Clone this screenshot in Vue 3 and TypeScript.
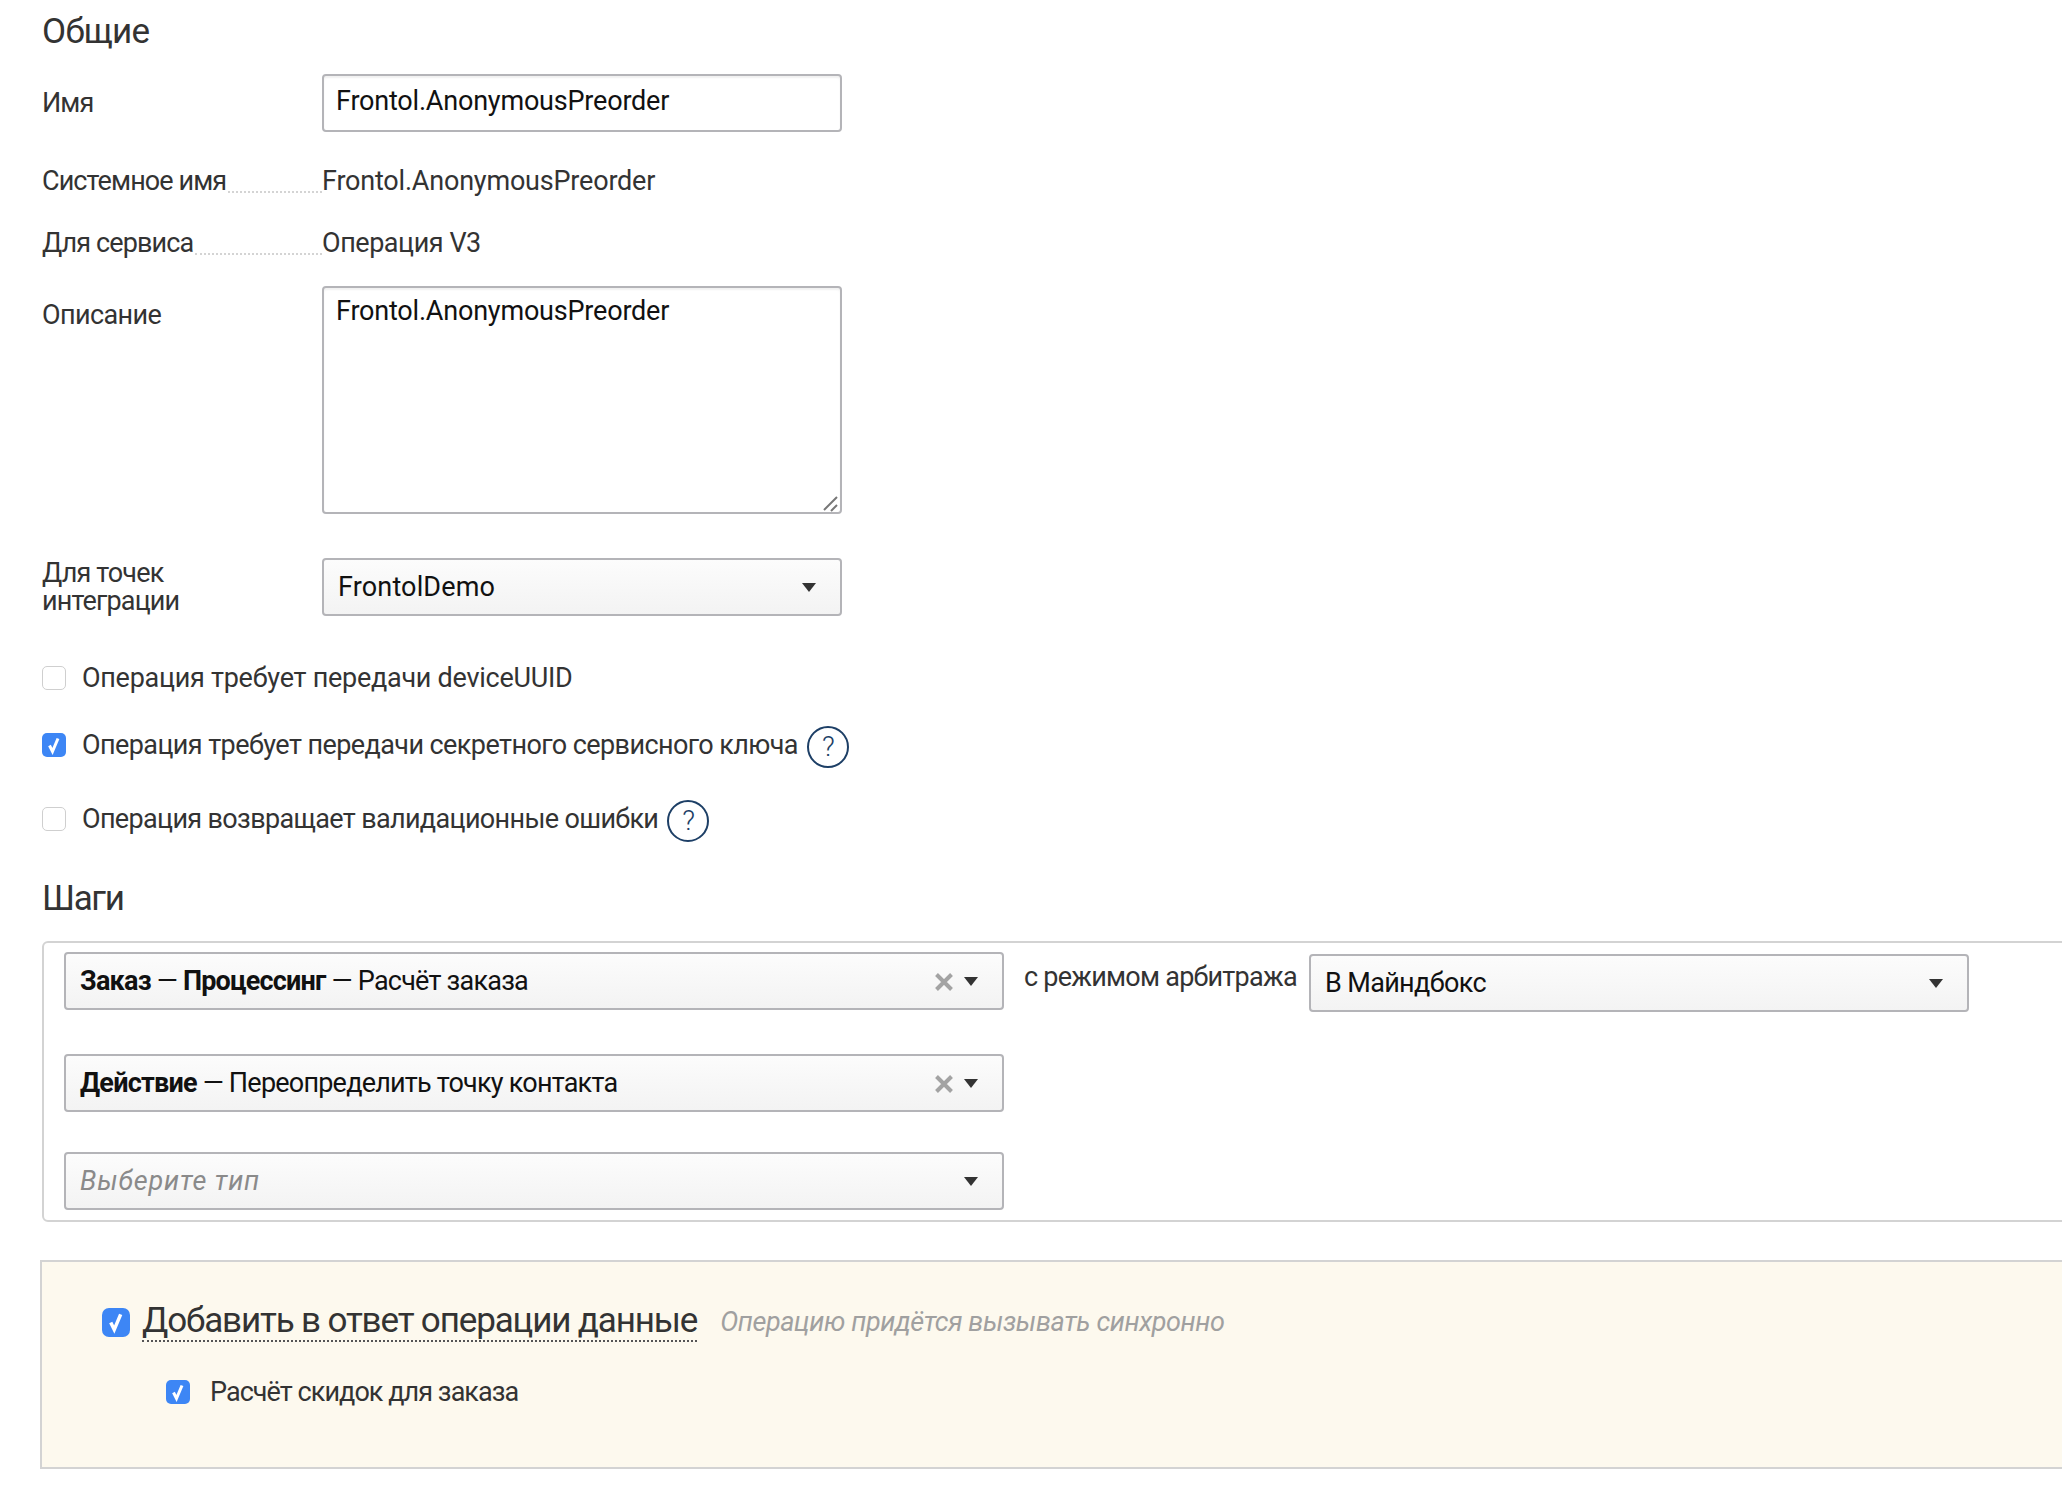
<script setup lang="ts">
const checks = [
  { text: 'Операция требует передачи deviceUUID', on: false, help: false, cls: 'ls-a' },
  { text: 'Операция требует передачи секретного сервисного ключа', on: true, help: true, cls: 'ls-b' },
  { text: 'Операция возвращает валидационные ошибки', on: false, help: true, cls: 'ls-c' },
]
</script>

<template>
  <div class="page">
    <h2 class="heading first">Общие</h2>

    <div class="row name-row">
      <label class="label">Имя</label>
      <input class="field" value="Frontol.AnonymousPreorder" />
    </div>
    <div class="row text-row sys-row">
      <div class="label dotted"><span>Системное имя</span><i></i></div>
      <div class="value latin">Frontol.AnonymousPreorder</div>
    </div>
    <div class="row text-row svc-row">
      <div class="label dotted"><span>Для сервиса</span><i></i></div>
      <div class="value svc-value">Операция V3</div>
    </div>
    <div class="row desc-row">
      <label class="label desc-label">Описание</label>
      <div class="area-wrap">
        <textarea class="field area">Frontol.AnonymousPreorder</textarea>
        <svg class="grip" viewBox="0 0 16 16" width="16" height="16"><path d="M1 14 L14 1 M8 15 L14 9" stroke="#777" stroke-width="2" fill="none" /></svg>
      </div>
    </div>
    <div class="row points-row">
      <label class="label two-line">Для точек<br />интеграции</label>
      <div class="select">
        <span class="select-text demo">FrontolDemo</span>
        <span class="caret"></span>
      </div>
    </div>

    <div class="checks">
      <div v-for="c in checks" :key="c.text" class="check-row">
        <span class="box" :class="{ on: c.on }">
          <svg v-if="c.on" viewBox="0 0 24 24" width="24" height="24"><path d="M7.5 12.5 L10.5 18.5 L16 5.5" fill="none" stroke="#fff" stroke-width="3" /></svg>
        </span>
        <span class="check-text" :class="c.cls">{{ c.text }}</span>
        <span v-if="c.help" class="help">?</span>
      </div>
    </div>

    <h2 class="heading steps-heading">Шаги</h2>

    <div class="steps">
      <div class="step step-one">
        <div class="select step-select">
          <span class="select-text ls-step"><b>Заказ</b> — <b>Процессинг</b> — Расчёт заказа</span>
          <svg class="cross" viewBox="0 0 18 18" width="18" height="18"><path d="M1.5 1.5 L16.5 16.5 M16.5 1.5 L1.5 16.5" stroke="#a3a3a3" stroke-width="4" /></svg>
          <span class="caret"></span>
        </div>
        <span class="mode">с режимом арбитража</span>
        <div class="select mode-select">
          <span class="select-text mode-value">В Майндбокс</span>
          <span class="caret"></span>
        </div>
      </div>
      <div class="step step-two">
        <div class="select step-select">
          <span class="select-text ls-step"><b>Действие</b> — Переопределить точку контакта</span>
          <svg class="cross" viewBox="0 0 18 18" width="18" height="18"><path d="M1.5 1.5 L16.5 16.5 M16.5 1.5 L1.5 16.5" stroke="#a3a3a3" stroke-width="4" /></svg>
          <span class="caret"></span>
        </div>
      </div>
      <div class="step step-three">
        <div class="select step-select">
          <span class="select-text placeholder">Выберите тип</span>
          <span class="caret"></span>
        </div>
      </div>
    </div>

    <div class="extra">
      <div class="extra-main">
        <span class="box on large">
          <svg viewBox="0 0 24 24" width="28" height="28"><path d="M7.5 12.5 L10.5 18.5 L16 5.5" fill="none" stroke="#fff" stroke-width="3" /></svg>
        </span>
        <span class="extra-title">Добавить в ответ операции данные</span>
        <span class="extra-hint">Операцию придётся вызывать синхронно</span>
      </div>
      <div class="extra-sub">
        <span class="box on">
          <svg viewBox="0 0 24 24" width="24" height="24"><path d="M7.5 12.5 L10.5 18.5 L16 5.5" fill="none" stroke="#fff" stroke-width="3" /></svg>
        </span>
        <span class="sub-text">Расчёт скидок для заказа</span>
      </div>
    </div>
  </div>
</template>

<style>
html, body { margin: 0; background: #fff; overflow: hidden; }
</style>

<style scoped>
.page {
  box-sizing: border-box;
  width: 2062px;
  height: 1486px;
  overflow: hidden;
  padding-left: 42px;
  font-family: Roboto, "Noto Sans", sans-serif;
  font-size: 27px;
  line-height: 28px;
  letter-spacing: -0.9px;
  color: #333;
}
.heading { margin: 0; font-size: 35px; line-height: 40px; font-weight: 400; letter-spacing: -0.7px; }
.first { padding-top: 12px; }
.row { display: grid; grid-template-columns: 280px 520px; }
.label { display: block; }
.name-row { margin-top: 22px; align-items: center; }
.field {
  box-sizing: border-box;
  width: 520px;
  height: 58px;
  margin: 0;
  padding: 0 12px 4px;
  border: 2px solid #b4b4b8;
  border-radius: 4px;
  background: #fff;
  box-shadow: inset 0 2px 2px rgba(0, 0, 0, 0.06);
  font: inherit;
  letter-spacing: -0.2px;
  color: #111;
  outline: none;
}
.text-row { height: 28px; align-items: end; }
.sys-row { margin-top: 35px; }
.svc-row { margin-top: 34px; }
.latin { letter-spacing: -0.2px; }
.svc-value { letter-spacing: -0.45px; }
.dotted { display: flex; align-items: flex-end; }
.dotted span { white-space: nowrap; }
.dotted i { flex: 1; margin: 0 0 2px 2px; border-bottom: 2px dotted #d4d4d4; }
.desc-row { margin-top: 29px; }
.desc-label { padding-top: 15px; letter-spacing: -0.6px; }
.area-wrap { position: relative; height: 228px; }
.area { height: 228px; padding: 9px 12px; resize: none; display: block; }
.grip { position: absolute; right: 3px; bottom: 2px; }
.points-row { margin-top: 44px; align-items: center; }
.two-line { letter-spacing: -0.85px; }
.select {
  box-sizing: border-box;
  display: flex;
  align-items: center;
  height: 58px;
  padding: 0 24px 0 14px;
  border: 2px solid #b4b4b8;
  border-radius: 4px;
  background: linear-gradient(#fcfcfc, #f3f3f3);
  color: #111;
}
.select-text { flex: 1; white-space: nowrap; }
.select-text b { font-weight: 700; }
.demo { letter-spacing: 0.15px; }
.mode-value { letter-spacing: -0.65px; }
.ls-step { letter-spacing: -0.78px; }
.caret {
  width: 0;
  height: 0;
  border-left: 7px solid transparent;
  border-right: 7px solid transparent;
  border-top: 9px solid #333;
}
.cross { margin: 2px 11px 0 0; }
.checks { display: flex; flex-direction: column; }
.check-row { display: flex; align-items: center; }
.check-row:nth-child(1) { height: 28px; margin-top: 48px; }
.check-row:nth-child(2) { height: 41px; margin-top: 32px; }
.check-row:nth-child(3) { height: 41px; margin-top: 33px; }
.box {
  box-sizing: border-box;
  flex: none;
  width: 24px;
  height: 24px;
  border: 1px solid #cfcfcf;
  border-radius: 5px;
  background: #fff;
  display: block;
}
.box.on { border: 0; background: #3d86f5; }
.box svg { display: block; }
.box.large { width: 28px; height: 29px; border-radius: 7px; }
.check-text { margin-left: 16px; white-space: nowrap; }
.ls-a { letter-spacing: -0.27px; }
.ls-b { letter-spacing: -0.58px; }
.ls-c { letter-spacing: -0.65px; }
.help {
  box-sizing: border-box;
  flex: none;
  width: 42px;
  height: 42px;
  margin: 4px 0 0 9px;
  border: 2px solid #1d3f66;
  border-radius: 50%;
  display: flex;
  align-items: center;
  justify-content: center;
  color: #1d3f66;
  font-size: 28px;
  font-weight: 300;
}
.steps-heading { margin-top: 40px; letter-spacing: -1.3px; }
.steps {
  box-sizing: border-box;
  width: 2100px;
  height: 281px;
  margin-top: 22px;
  padding: 9px 0 0 20px;
  border: 2px solid #d3d3d3;
  border-radius: 6px;
}
.step { display: flex; align-items: flex-start; }
.step-select { width: 940px; flex: none; }
.step-two { margin-top: 42px; }
.step-three { margin-top: 40px; }
.mode { margin: 11px 0 0 20px; width: 285px; flex: none; white-space: nowrap; letter-spacing: -0.75px; }
.mode-select { width: 660px; flex: none; margin-top: 2px; }
.placeholder { color: #8a8a8a; font-style: italic; letter-spacing: 0.85px; }
.extra {
  box-sizing: border-box;
  width: 2100px;
  height: 209px;
  margin: 38px 0 0 -2px;
  padding: 40px 0 0 60px;
  border: 2px solid #d3d3d3;
  background: #fdf9ee;
}
.extra-main { display: flex; align-items: center; height: 40px; }
.extra-title {
  margin-left: 12px;
  font-size: 35px;
  line-height: 38px;
  letter-spacing: -1.15px;
  white-space: nowrap;
  border-bottom: 2px dotted #555;
}
.extra-hint { margin-left: 23px; color: #a0a0a0; font-style: italic; white-space: nowrap; letter-spacing: -0.4px; }
.extra-sub { display: flex; align-items: center; height: 28px; margin: 36px 0 0 64px; }
.sub-text { margin-left: 20px; white-space: nowrap; letter-spacing: -0.95px; }
</style>
